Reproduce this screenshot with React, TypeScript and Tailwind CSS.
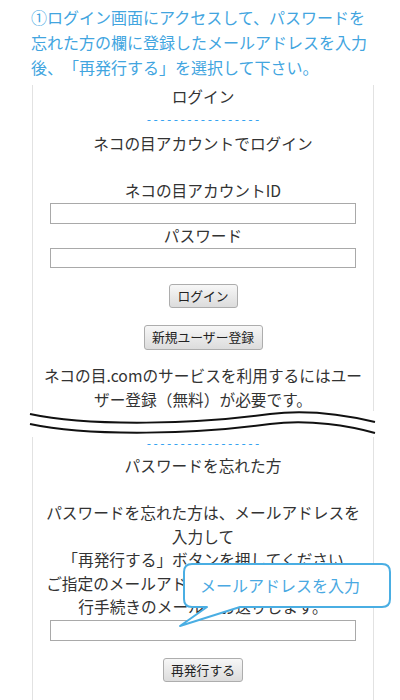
const jp = "font-['Noto_Sans_CJK_JP','Noto_Sans',sans-serif]";

const intro = [
  "①ログイン画面にアクセスして、パスワードを",
  "忘れた方の欄に登録したメールアドレスを入力",
  "後、「再発行する」を選択して下さい。",
];

function Dashes({ className = "" }: { className?: string }) {
  return (
    <div
      className={`whitespace-nowrap font-['Liberation_Mono',monospace] text-[11.3px] text-[#1e9bf0] ${className}`}
    >
      -----------------
    </div>
  );
}

function Field({ className = "" }: { className?: string }) {
  return (
    <div className={`mx-auto w-[306px] border border-[#a9a9a9] bg-white ${className}`} />
  );
}

function Btn({ label, className = "" }: { label: string; className?: string }) {
  return (
    <button
      type="button"
      className={`mx-auto flex items-center justify-center rounded-[3px] border border-[#adadad] bg-gradient-to-b from-[#f7f7f7] to-[#dcdcdc] text-[12.8px] text-[#222] ${className}`}
    >
      {label}
    </button>
  );
}

function Wave() {
  return (
    <div className="relative h-[26px] w-[345px] bg-white">
      <svg
        className="absolute left-0 top-0 overflow-visible"
        width="345"
        height="26"
        viewBox="0 0 345 26"
        fill="none"
      >
        <path
          d="M0 3 C60 16 170 13 240 3 C280 -2 320 5 345 11"
          stroke="#111"
          strokeWidth="2"
        />
        <path
          d="M0 13 C60 26 170 23 240 13 C280 8 320 15 345 22"
          stroke="#111"
          strokeWidth="2"
        />
      </svg>
    </div>
  );
}

export default function App() {
  return (
    <div
      className={`relative h-[700px] w-[400px] overflow-hidden bg-white [text-spacing-trim:space-all] ${jp}`}
    >
      <div className="pl-[31px] pt-[5px] text-[16px] leading-[25px] text-[#42a5df]">
        {intro.map((line) => (
          <div key={line} className="whitespace-nowrap">
            {line}
          </div>
        ))}
      </div>

      <div className="ml-[30px] mt-[5px] w-[345px]">
        <div className="ml-[2px] w-[342px] border-x border-[#e2e2e2] text-center text-[15.7px] leading-[23.5px] text-[#333]">
          <div>ログイン</div>
          <Dashes className="leading-[23.5px]" />
          <div>ネコの目アカウントでログイン</div>
          <div className="h-[23.5px]" />
          <div>ネコの目アカウントID</div>
          <Field className="h-[21px]" />
          <div className="leading-[24px]">パスワード</div>
          <Field className="h-[20px]" />
          <Btn label="ログイン" className="mt-[16px] h-[24px] w-[69px]" />
          <Btn label="新規ユーザー登録" className="mt-[17px] h-[25px] w-[119px]" />
          <div className="mt-[14.5px] whitespace-nowrap">
            ネコの目.comのサービスを利用するにはユー
          </div>
          <div className="whitespace-nowrap">ザー登録（無料）が必要です。</div>
        </div>

        <Wave />

        <div className="ml-[2px] w-[342px] border-x border-[#e2e2e2] pb-[30px] text-center text-[15.7px] leading-[23.5px] text-[#333]">
          <Dashes className="leading-[14px]" />
          <div className="mt-[3px]">パスワードを忘れた方</div>
          <div className="h-[23.5px]" />
          <div className="whitespace-nowrap">パスワードを忘れた方は、メールアドレスを</div>
          <div>入力して</div>
          <div className="whitespace-nowrap">「再発行する」ボタンを押してください</div>
          <div className="whitespace-nowrap">ご指定のメールアドレスへパスワードの再発</div>
          <div className="whitespace-nowrap">行手続きのメールをお送りします。</div>
          <Field className="mt-[1px] h-[21px]" />
          <Btn label="再発行する" className="mt-[17px] h-[24px] w-[80px]" />
        </div>
      </div>

      <div className="absolute left-[178px] top-[561px] h-[70px] w-[216px]">
        <svg width="216" height="70" viewBox="0 0 216 70" fill="none" className="absolute inset-0">
          <path
            d="M14 3 H204 Q212 3 212 11 V38 Q212 46 204 46 H62 L2 65 L29 46 H14 Q6 46 6 38 V11 Q6 3 14 3 Z"
            fill="#fff"
            stroke="#4aaee3"
            strokeWidth="2"
            strokeLinejoin="round"
          />
        </svg>
        <div className="absolute left-[22px] top-[14px] whitespace-nowrap text-[16px] leading-[20px] text-[#4aa9e2]">
          メールアドレスを入力
        </div>
      </div>
    </div>
  );
}
